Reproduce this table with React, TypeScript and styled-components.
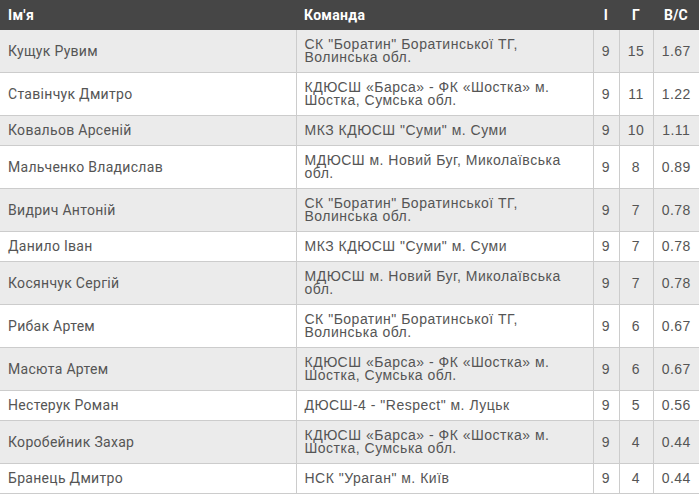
import React from "react";
import styled, { createGlobalStyle } from "styled-components";

const GlobalStyle = createGlobalStyle`
  body {
    margin: 0;
    background: #ffffff;
  }
`;

type Row = {
  name: string;
  team: string;
  games: number;
  goals: number;
  ratio: string;
};

const rows: Row[] = [
  { name: "Кущук Рувим", team: "СК \"Боратин\" Боратинської ТГ, Волинська обл.", games: 9, goals: 15, ratio: "1.67" },
  { name: "Ставінчук Дмитро", team: "КДЮСШ «Барса» - ФК «Шостка» м. Шостка, Сумська обл.", games: 9, goals: 11, ratio: "1.22" },
  { name: "Ковальов Арсеній", team: "МКЗ КДЮСШ \"Суми\" м. Суми", games: 9, goals: 10, ratio: "1.11" },
  { name: "Мальченко Владислав", team: "МДЮСШ м. Новий Буг, Миколаївська обл.", games: 9, goals: 8, ratio: "0.89" },
  { name: "Видрич Антоній", team: "СК \"Боратин\" Боратинської ТГ, Волинська обл.", games: 9, goals: 7, ratio: "0.78" },
  { name: "Данило Іван", team: "МКЗ КДЮСШ \"Суми\" м. Суми", games: 9, goals: 7, ratio: "0.78" },
  { name: "Косянчук Сергій", team: "МДЮСШ м. Новий Буг, Миколаївська обл.", games: 9, goals: 7, ratio: "0.78" },
  { name: "Рибак Артем", team: "СК \"Боратин\" Боратинської ТГ, Волинська обл.", games: 9, goals: 6, ratio: "0.67" },
  { name: "Масюта Артем", team: "КДЮСШ «Барса» - ФК «Шостка» м. Шостка, Сумська обл.", games: 9, goals: 6, ratio: "0.67" },
  { name: "Нестерук Роман", team: "ДЮСШ-4 - \"Respect\" м. Луцьк", games: 9, goals: 5, ratio: "0.56" },
  { name: "Коробейник Захар", team: "КДЮСШ «Барса» - ФК «Шостка» м. Шостка, Сумська обл.", games: 9, goals: 4, ratio: "0.44" },
  { name: "Бранець Дмитро", team: "НСК \"Ураган\" м. Київ", games: 9, goals: 4, ratio: "0.44" },
];

const Table = styled.table`
  width: 699px;
  border-collapse: collapse;
  table-layout: fixed;
`;

const HeadRow = styled.tr`
  background: #464646;
`;

const HeadCell = styled.th<{ $center?: boolean; $width: number }>`
  width: ${(p) => p.$width}px;
  height: 30px;
  padding: 0 8px;
  text-align: ${(p) => (p.$center ? "center" : "left")};
  color: #ffffff;
  font-family: Roboto, "Liberation Sans", sans-serif;
  font-weight: 700;
  font-size: 14px;
  letter-spacing: 0.3px;
  box-sizing: border-box;
`;

const BodyRow = styled.tr<{ $odd: boolean }>`
  background: ${(p) => (p.$odd ? "#ebebeb" : "#ffffff")};
`;

const Cell = styled.td`
  padding: 8px 8px;
  border-bottom: 1px solid #cccccc;
  border-right: 1px solid #cccccc;
  font-size: 14px;
  line-height: 13px;
  color: #555555;
  vertical-align: middle;

  &:last-child {
    border-right: none;
  }
`;

const NameCell = styled(Cell)`
  font-family: Roboto, "Liberation Sans", sans-serif;
  letter-spacing: 0.3px;
`;

const TeamCell = styled(Cell)`
  font-family: "Liberation Sans", Arial, sans-serif;
  letter-spacing: 0.5px;
`;

const NumCell = styled(Cell)`
  font-family: "Liberation Sans", Arial, sans-serif;
  letter-spacing: 0.5px;
  text-align: center;
  padding: 8px 0;
`;

export default function App() {
  return (
    <>
      <GlobalStyle />
      <Table>
        <thead>
          <HeadRow>
            <HeadCell $width={296}>Ім'я</HeadCell>
            <HeadCell $width={297}>Команда</HeadCell>
            <HeadCell $width={26} $center>I</HeadCell>
            <HeadCell $width={34} $center>Г</HeadCell>
            <HeadCell $width={46} $center>В/С</HeadCell>
          </HeadRow>
        </thead>
        <tbody>
          {rows.map((r, i) => (
            <BodyRow key={i} $odd={i % 2 === 0}>
              <NameCell>{r.name}</NameCell>
              <TeamCell>{r.team}</TeamCell>
              <NumCell>{r.games}</NumCell>
              <NumCell>{r.goals}</NumCell>
              <NumCell>{r.ratio}</NumCell>
            </BodyRow>
          ))}
        </tbody>
      </Table>
    </>
  );
}
